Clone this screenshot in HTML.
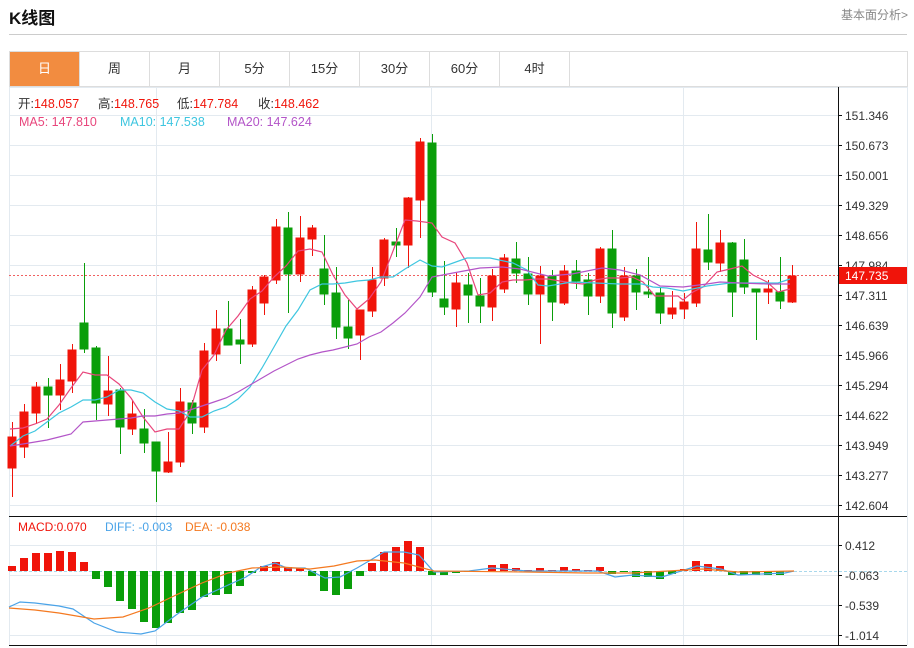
<!DOCTYPE html>
<html><head><meta charset="utf-8"><style>
*{margin:0;padding:0;box-sizing:border-box}
body{width:914px;height:648px;background:#fff;font-family:"Liberation Sans","Noto Sans CJK SC",sans-serif;position:relative;overflow:hidden}
.t{position:absolute;left:9px;top:4px;font-size:17px;font-weight:bold;color:#111}
.r{position:absolute;right:6px;top:6px;font-size:12px;color:#888}
.hl{position:absolute;left:9px;top:34px;width:898px;height:1px;background:#ccc}
.tabs{position:absolute;left:9px;top:51px;width:899px;height:36px;border:1px solid #ddd;display:flex}
.tabs div{width:70px;border-right:1px solid #ddd;text-align:center;line-height:34px;font-size:13px;color:#333}
.tabs div.a{background:#f28c40;color:#fff}
svg{position:absolute;left:0;top:0}
</style></head><body>
<div class="t">K线图</div><div class="r">基本面分析&gt;</div><div class="hl"></div>
<div class="tabs"><div class="a">日</div><div>周</div><div>月</div><div>5分</div><div>15分</div><div>30分</div><div>60分</div><div>4时</div></div>
<svg width="914" height="648" xmlns="http://www.w3.org/2000/svg" font-family="Liberation Sans, Noto Sans CJK SC, sans-serif">
<g stroke="#e3eaf0" stroke-width="1">
<line x1="9" y1="87.5" x2="907" y2="87.5"/>
<line x1="9" y1="115.5" x2="838" y2="115.5"/><line x1="9" y1="145.5" x2="838" y2="145.5"/><line x1="9" y1="175.5" x2="838" y2="175.5"/><line x1="9" y1="205.5" x2="838" y2="205.5"/><line x1="9" y1="235.5" x2="838" y2="235.5"/><line x1="9" y1="265.5" x2="838" y2="265.5"/><line x1="9" y1="295.5" x2="838" y2="295.5"/><line x1="9" y1="325.5" x2="838" y2="325.5"/><line x1="9" y1="355.5" x2="838" y2="355.5"/><line x1="9" y1="385.5" x2="838" y2="385.5"/><line x1="9" y1="415.5" x2="838" y2="415.5"/><line x1="9" y1="445.5" x2="838" y2="445.5"/><line x1="9" y1="475.5" x2="838" y2="475.5"/><line x1="9" y1="505.5" x2="838" y2="505.5"/>
<line x1="9" y1="545.5" x2="838" y2="545.5"/><line x1="9" y1="605.5" x2="838" y2="605.5"/><line x1="9" y1="635.5" x2="838" y2="635.5"/>
<line x1="156.5" y1="87" x2="156.5" y2="645"/><line x1="431.5" y1="87" x2="431.5" y2="645"/><line x1="683.5" y1="87" x2="683.5" y2="645"/>
<line x1="9.5" y1="87" x2="9.5" y2="645"/><line x1="907.5" y1="87" x2="907.5" y2="645"/>
</g>
<line x1="9" y1="575.5" x2="838" y2="575.5" stroke="#e3eaf0"/>
<line x1="9" y1="571.5" x2="907" y2="571.5" stroke="#a8d8ec" stroke-dasharray="3,2"/>
<line x1="9" y1="275.5" x2="838" y2="275.5" stroke="#f06060" stroke-dasharray="2,2"/>
<line x1="838.5" y1="87" x2="838.5" y2="645" stroke="#111"/>
<line x1="9" y1="516.5" x2="907" y2="516.5" stroke="#111"/>
<line x1="9" y1="645.5" x2="907" y2="645.5" stroke="#111"/>
<g stroke="#111"><line x1="838" y1="115.5" x2="842" y2="115.5"/><line x1="838" y1="145.5" x2="842" y2="145.5"/><line x1="838" y1="175.5" x2="842" y2="175.5"/><line x1="838" y1="205.5" x2="842" y2="205.5"/><line x1="838" y1="235.5" x2="842" y2="235.5"/><line x1="838" y1="265.5" x2="842" y2="265.5"/><line x1="838" y1="295.5" x2="842" y2="295.5"/><line x1="838" y1="325.5" x2="842" y2="325.5"/><line x1="838" y1="355.5" x2="842" y2="355.5"/><line x1="838" y1="385.5" x2="842" y2="385.5"/><line x1="838" y1="415.5" x2="842" y2="415.5"/><line x1="838" y1="445.5" x2="842" y2="445.5"/><line x1="838" y1="475.5" x2="842" y2="475.5"/><line x1="838" y1="505.5" x2="842" y2="505.5"/><line x1="838" y1="545.5" x2="842" y2="545.5"/><line x1="838" y1="575.5" x2="842" y2="575.5"/><line x1="838" y1="605.5" x2="842" y2="605.5"/><line x1="838" y1="635.5" x2="842" y2="635.5"/></g>
<g font-size="12" fill="#333">
<text x="845" y="120">151.346</text><text x="845" y="150">150.673</text><text x="845" y="180">150.001</text><text x="845" y="210">149.329</text><text x="845" y="240">148.656</text><text x="845" y="270">147.984</text><text x="845" y="300">147.311</text><text x="845" y="330">146.639</text><text x="845" y="360">145.966</text><text x="845" y="390">145.294</text><text x="845" y="420">144.622</text><text x="845" y="450">143.949</text><text x="845" y="480">143.277</text><text x="845" y="510">142.604</text>
<text x="845" y="550">0.412</text><text x="845" y="580">-0.063</text><text x="845" y="610">-0.539</text><text x="845" y="640">-1.014</text>
</g>
<rect x="839" y="267" width="68" height="17" fill="#f0140a"/>
<text x="845" y="280" font-size="12" fill="#fff">147.735</text>
<g font-size="12.5">
<text x="18" y="108" fill="#333">开:<tspan fill="#f0140a">148.057</tspan></text>
<text x="98" y="108" fill="#333">高:<tspan fill="#f0140a">148.765</tspan></text>
<text x="177" y="108" fill="#333">低:<tspan fill="#f0140a">147.784</tspan></text>
<text x="258" y="108" fill="#333">收:<tspan fill="#f0140a">148.462</tspan></text>
<text x="19" y="126" fill="#e8467c">MA5: 147.810</text>
<text x="120" y="126" fill="#3ec6e0">MA10: 147.538</text>
<text x="227" y="126" fill="#b355c8">MA20: 147.624</text>
<text x="18" y="531" font-size="12" fill="#f0140a">MACD:0.070</text>
<text x="105" y="531" font-size="12" fill="#4aa3e8">DIFF: -0.003</text>
<text x="185" y="531" font-size="12" fill="#f47920">DEA: -0.038</text>
</g>
<g stroke-width="1">
<g fill="#f0140a" stroke="#f0140a">
<line x1="12.5" y1="422" x2="12.5" y2="497"/><rect x="8" y="437" width="8" height="31"/>
<line x1="24.5" y1="404" x2="24.5" y2="458"/><rect x="20" y="412" width="8" height="35"/>
<line x1="36.5" y1="382" x2="36.5" y2="424"/><rect x="32" y="387" width="8" height="26"/>
<line x1="60.5" y1="364" x2="60.5" y2="410"/><rect x="56" y="380" width="8" height="15"/>
<line x1="72.5" y1="344" x2="72.5" y2="393"/><rect x="68" y="350" width="8" height="31"/>
<line x1="108.5" y1="356" x2="108.5" y2="416"/><rect x="104" y="391" width="8" height="13"/>
<line x1="132.5" y1="401" x2="132.5" y2="435"/><rect x="128" y="414" width="8" height="15"/>
<line x1="168.5" y1="432" x2="168.5" y2="473"/><rect x="164" y="462" width="8" height="10"/>
<line x1="180.5" y1="388" x2="180.5" y2="467"/><rect x="176" y="402" width="8" height="60"/>
<line x1="204.5" y1="343" x2="204.5" y2="433"/><rect x="200" y="351" width="8" height="76"/>
<line x1="216.5" y1="310" x2="216.5" y2="361"/><rect x="212" y="329" width="8" height="25"/>
<line x1="252.5" y1="286" x2="252.5" y2="347"/><rect x="248" y="290" width="8" height="54"/>
<line x1="264.5" y1="275" x2="264.5" y2="315"/><rect x="260" y="277" width="8" height="26"/>
<line x1="276.5" y1="219" x2="276.5" y2="284"/><rect x="272" y="227" width="8" height="53"/>
<line x1="300.5" y1="216" x2="300.5" y2="282"/><rect x="296" y="238" width="8" height="36"/>
<line x1="312.5" y1="225" x2="312.5" y2="256"/><rect x="308" y="228" width="8" height="11"/>
<line x1="360.5" y1="310" x2="360.5" y2="360"/><rect x="356" y="310" width="8" height="25"/>
<line x1="372.5" y1="267" x2="372.5" y2="317"/><rect x="368" y="280" width="8" height="31"/>
<line x1="384.5" y1="238" x2="384.5" y2="286"/><rect x="380" y="240" width="8" height="38"/>
<line x1="408.5" y1="197" x2="408.5" y2="268"/><rect x="404" y="198" width="8" height="47"/>
<line x1="420.5" y1="138" x2="420.5" y2="238"/><rect x="416" y="142" width="8" height="58"/>
<line x1="456.5" y1="273" x2="456.5" y2="327"/><rect x="452" y="283" width="8" height="26"/>
<line x1="492.5" y1="269" x2="492.5" y2="321"/><rect x="488" y="276" width="8" height="31"/>
<line x1="504.5" y1="254" x2="504.5" y2="293"/><rect x="500" y="258" width="8" height="31"/>
<line x1="540.5" y1="266" x2="540.5" y2="344"/><rect x="536" y="276" width="8" height="18"/>
<line x1="564.5" y1="265" x2="564.5" y2="305"/><rect x="560" y="271" width="8" height="32"/>
<line x1="600.5" y1="247" x2="600.5" y2="303"/><rect x="596" y="249" width="8" height="47"/>
<line x1="624.5" y1="267" x2="624.5" y2="321"/><rect x="620" y="276" width="8" height="41"/>
<line x1="672.5" y1="291" x2="672.5" y2="319"/><rect x="668" y="308" width="8" height="6"/>
<line x1="684.5" y1="293" x2="684.5" y2="319"/><rect x="680" y="302" width="8" height="7"/>
<line x1="696.5" y1="222" x2="696.5" y2="307"/><rect x="692" y="249" width="8" height="54"/>
<line x1="720.5" y1="230" x2="720.5" y2="272"/><rect x="716" y="243" width="8" height="20"/>
<line x1="768.5" y1="280" x2="768.5" y2="304"/><rect x="764" y="289" width="8" height="3"/>
<line x1="792.5" y1="265" x2="792.5" y2="303"/><rect x="788" y="276" width="8" height="26"/>
</g>
<g fill="#0a9e0a" stroke="#0a9e0a">
<line x1="48.5" y1="378" x2="48.5" y2="428"/><rect x="44" y="387" width="8" height="8"/>
<line x1="84.5" y1="263" x2="84.5" y2="353"/><rect x="80" y="323" width="8" height="26"/>
<line x1="96.5" y1="346" x2="96.5" y2="420"/><rect x="92" y="348" width="8" height="55"/>
<line x1="120.5" y1="388" x2="120.5" y2="454"/><rect x="116" y="390" width="8" height="37"/>
<line x1="144.5" y1="409" x2="144.5" y2="453"/><rect x="140" y="429" width="8" height="14"/>
<line x1="156.5" y1="442" x2="156.5" y2="502"/><rect x="152" y="442" width="8" height="29"/>
<line x1="192.5" y1="400" x2="192.5" y2="434"/><rect x="188" y="403" width="8" height="20"/>
<line x1="228.5" y1="301" x2="228.5" y2="345"/><rect x="224" y="329" width="8" height="16"/>
<line x1="240.5" y1="319" x2="240.5" y2="364"/><rect x="236" y="340" width="8" height="4"/>
<line x1="288.5" y1="212" x2="288.5" y2="313"/><rect x="284" y="228" width="8" height="46"/>
<line x1="324.5" y1="235" x2="324.5" y2="305"/><rect x="320" y="269" width="8" height="25"/>
<line x1="336.5" y1="267" x2="336.5" y2="339"/><rect x="332" y="293" width="8" height="34"/>
<line x1="348.5" y1="300" x2="348.5" y2="349"/><rect x="344" y="327" width="8" height="11"/>
<line x1="396.5" y1="228" x2="396.5" y2="257"/><rect x="392" y="242" width="8" height="3"/>
<line x1="432.5" y1="134" x2="432.5" y2="297"/><rect x="428" y="143" width="8" height="149"/>
<line x1="444.5" y1="261" x2="444.5" y2="315"/><rect x="440" y="299" width="8" height="8"/>
<line x1="468.5" y1="273" x2="468.5" y2="323"/><rect x="464" y="285" width="8" height="10"/>
<line x1="480.5" y1="278" x2="480.5" y2="323"/><rect x="476" y="296" width="8" height="10"/>
<line x1="516.5" y1="242" x2="516.5" y2="283"/><rect x="512" y="259" width="8" height="14"/>
<line x1="528.5" y1="257" x2="528.5" y2="305"/><rect x="524" y="274" width="8" height="20"/>
<line x1="552.5" y1="270" x2="552.5" y2="321"/><rect x="548" y="276" width="8" height="26"/>
<line x1="576.5" y1="260" x2="576.5" y2="289"/><rect x="572" y="271" width="8" height="10"/>
<line x1="588.5" y1="273" x2="588.5" y2="315"/><rect x="584" y="280" width="8" height="16"/>
<line x1="612.5" y1="230" x2="612.5" y2="328"/><rect x="608" y="249" width="8" height="64"/>
<line x1="636.5" y1="269" x2="636.5" y2="310"/><rect x="632" y="276" width="8" height="16"/>
<line x1="648.5" y1="257" x2="648.5" y2="298"/><rect x="644" y="292" width="8" height="2"/>
<line x1="660.5" y1="288" x2="660.5" y2="324"/><rect x="656" y="293" width="8" height="20"/>
<line x1="708.5" y1="214" x2="708.5" y2="270"/><rect x="704" y="250" width="8" height="12"/>
<line x1="732.5" y1="242" x2="732.5" y2="317"/><rect x="728" y="243" width="8" height="49"/>
<line x1="744.5" y1="239" x2="744.5" y2="294"/><rect x="740" y="260" width="8" height="27"/>
<line x1="756.5" y1="289" x2="756.5" y2="340"/><rect x="752" y="289" width="8" height="3"/>
<line x1="780.5" y1="257" x2="780.5" y2="309"/><rect x="776" y="292" width="8" height="9"/>
</g>
</g>
<g fill="none" stroke-width="1.2">
<polyline stroke="#e8467c" points="10,429 23,428 35,424 47,419 59,405 71,388 83,372 95,375 107,375 119,384 131,398 143,417 155,432 167,429 179,429 190,412 202,370 214,355 226,330 238,316 250,299 262,291 274,277 286,266 298,251 310,249 322,252 333,275 345,295 357,309 369,299 381,282 393,251 405,220 417,221 432,223 442,237 455,243 467,263 478,295 490,293 502,282 513,280 525,280 537,279 548,279 560,281 572,283 583,284 595,280 607,278 620,278 632,277 643,282 655,296 667,296 678,296 683,300 693,292 703,287 717,272 730,269 742,266 753,275 767,282 778,292 790,289"/>
<polyline stroke="#3ec6e0" points="10,446 23,436 35,431 47,422 59,413 71,407 83,400 95,400 107,397 119,390 131,390 143,393 155,402 167,409 179,411 190,417 202,417 214,411 226,407 238,399 250,387 262,368 274,347 286,326 298,310 310,290 322,284 333,284 345,283 357,281 369,280 381,277 393,277 405,269 420,260 432,266 442,267 467,258 490,258 513,263 527,270 538,285 548,286 572,282 595,283 620,284 642,284 653,287 667,288 683,291 707,286 730,283 767,283 778,283 790,279"/>
<polyline stroke="#b355c8" points="10,446 23,444 35,442 47,440 59,437 71,434 83,422 95,421 107,420 119,419 131,418 143,416 155,416 167,414 179,413 190,410 202,406 214,402 226,398 238,392 250,385 262,378 274,371 286,365 298,359 310,355 322,352 333,350 345,347 357,344 369,337 381,332 393,323 405,313 420,297 432,277 453,273 480,268 502,267 520,269 548,276 572,274 602,268 620,270 640,275 660,286 683,287 707,284 720,282 740,283 767,284 790,284"/>
</g>
<g fill="#f0140a">
<rect x="8" y="566" width="8" height="5"/><rect x="20" y="558" width="8" height="13"/><rect x="32" y="553" width="8" height="18"/><rect x="44" y="553" width="8" height="18"/><rect x="56" y="551" width="8" height="20"/><rect x="68" y="552" width="8" height="19"/><rect x="80" y="562" width="8" height="9"/>
<rect x="260" y="566" width="8" height="5"/><rect x="272" y="562" width="8" height="9"/><rect x="284" y="567" width="8" height="4"/><rect x="296" y="568" width="8" height="3"/>
<rect x="368" y="563" width="8" height="8"/><rect x="380" y="552" width="8" height="19"/><rect x="392" y="547" width="8" height="24"/><rect x="404" y="541" width="8" height="30"/><rect x="416" y="547" width="8" height="24"/>
<rect x="488" y="565" width="8" height="6"/><rect x="500" y="564" width="8" height="7"/><rect x="512" y="568" width="8" height="3"/><rect x="524" y="570" width="8" height="1"/><rect x="536" y="568" width="8" height="3"/><rect x="548" y="570" width="8" height="1"/><rect x="560" y="567" width="8" height="4"/><rect x="572" y="569" width="8" height="2"/><rect x="584" y="570" width="8" height="1"/><rect x="596" y="567" width="8" height="4"/>
<rect x="680" y="569" width="8" height="2"/><rect x="692" y="561" width="8" height="10"/><rect x="704" y="564" width="8" height="7"/><rect x="716" y="566" width="8" height="5"/>
</g>
<g fill="#0a9e0a">
<rect x="92" y="571" width="8" height="8"/><rect x="104" y="571" width="8" height="16"/><rect x="116" y="571" width="8" height="30"/><rect x="128" y="571" width="8" height="38"/><rect x="140" y="571" width="8" height="51"/><rect x="152" y="571" width="8" height="57"/><rect x="164" y="571" width="8" height="52"/><rect x="176" y="571" width="8" height="42"/><rect x="188" y="571" width="8" height="39"/><rect x="200" y="571" width="8" height="26"/><rect x="212" y="571" width="8" height="24"/><rect x="224" y="571" width="8" height="23"/><rect x="236" y="571" width="8" height="15"/><rect x="248" y="571" width="8" height="2"/>
<rect x="308" y="571" width="8" height="5"/><rect x="320" y="571" width="8" height="20"/><rect x="332" y="571" width="8" height="24"/><rect x="344" y="571" width="8" height="18"/><rect x="356" y="571" width="8" height="5"/>
<rect x="428" y="571" width="8" height="4"/><rect x="440" y="571" width="8" height="4"/><rect x="452" y="571" width="8" height="2"/><rect x="464" y="571" width="8" height="1"/>
<rect x="608" y="571" width="8" height="3"/><rect x="620" y="571" width="8" height="1"/><rect x="632" y="571" width="8" height="6"/><rect x="644" y="571" width="8" height="6"/><rect x="656" y="571" width="8" height="8"/><rect x="668" y="571" width="8" height="3"/>
<rect x="728" y="571" width="8" height="4"/><rect x="740" y="571" width="8" height="4"/><rect x="752" y="571" width="8" height="4"/><rect x="764" y="571" width="8" height="4"/><rect x="776" y="571" width="8" height="4"/>
</g>
<g fill="none" stroke-width="1.2">
<polyline stroke="#4aa3e8" points="9,607 20,602 35,603 59,606 73,609 94,623 117,632 141,634 155,631 176,615 202,597 226,586 246,577 261,567 275,563 287,568 305,568 325,578 340,577 357,568 369,561 384,552 404,552 419,555 434,572 469,571 492,568 527,571 562,571 598,571 615,577 633,575 662,577 697,566 721,569 738,575 785,573 794,571"/>
<polyline stroke="#f47920" points="9,608 35,610 59,613 94,619 123,617 149,608 176,595 202,583 228,573 252,568 281,567 310,569 334,566 357,561 375,560 404,563 434,571 527,572 586,573 633,573 703,569 738,572 794,571"/>
</g>
</svg>
</body></html>
